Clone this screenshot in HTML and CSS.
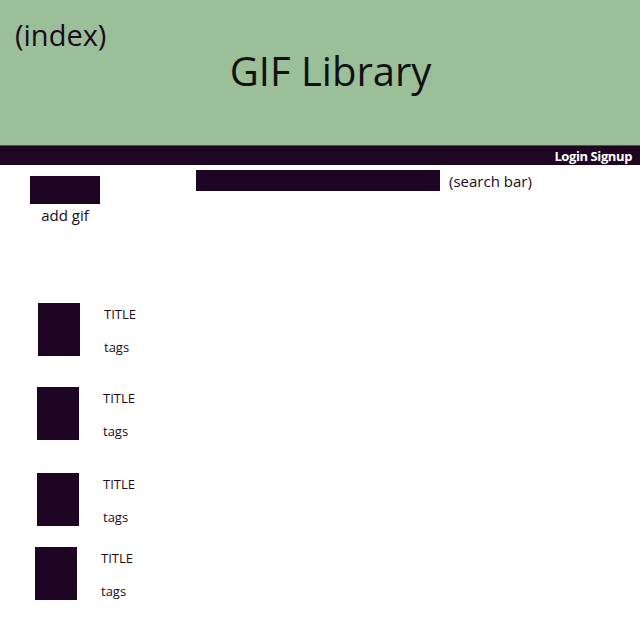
FILE: index.html
```html
<!DOCTYPE html>
<html>
<head>
<meta charset="utf-8">
<link rel="stylesheet" href="styles.css">
</head>
<body>
<header class="hero">
  <div class="hero-label">(index)</div>
  <h1 class="hero-title">GIF Library</h1>
</header>
<nav class="navbar">
  <span class="nav-links">Login Signup</span>
</nav>
<main class="content">
  <div class="toolbar">
    <div class="add">
      <div class="add-btn"></div>
      <div class="add-label">add gif</div>
    </div>
    <div class="search">
      <div class="search-bar"></div>
      <span class="search-label">(search bar)</span>
    </div>
  </div>
  <ul class="gif-list">
    <li class="gif gif-1"><div class="thumb"></div><div class="meta"><div class="title">TITLE</div><div class="tags">tags</div></div></li>
    <li class="gif gif-2"><div class="thumb"></div><div class="meta"><div class="title">TITLE</div><div class="tags">tags</div></div></li>
    <li class="gif gif-3"><div class="thumb"></div><div class="meta"><div class="title">TITLE</div><div class="tags">tags</div></div></li>
    <li class="gif gif-4"><div class="thumb"></div><div class="meta"><div class="title">TITLE</div><div class="tags">tags</div></div></li>
  </ul>
</main>
</body>
</html>
```
FILE: styles.css
```css
* { box-sizing: border-box; }
body {
  margin: 0;
  font-family: "Open Sans", "Noto Sans", sans-serif;
  color: #1b0a20;
  background: #fff;
}
.hero {
  height: 145px;
  background: #9bbf99;
  padding: 20px 0 0 15px;
}
.hero-label {
  font-size: 29px;
  line-height: 29px;
}
.hero-title {
  margin: 0;
  font-weight: 400;
  font-size: 40px;
  line-height: 54px;
  text-align: center;
  margin-top: -5px;
  padding-left: 6px;
  color: #111;
}
.navbar {
  height: 20px;
  background: #1f0623;
  border-top: 1px solid #5a4a5c;
  display: flex;
  justify-content: flex-end;
  align-items: center;
  padding-right: 8px;
}
.nav-links {
  color: #fff;
  font-weight: 700;
  font-size: 13px;
  letter-spacing: -0.4px;
}
.toolbar {
  display: flex;
  align-items: flex-start;
  padding: 5px 0 0 30px;
}
.add {
  width: 70px;
  margin-top: 6px;
  display: flex;
  flex-direction: column;
  align-items: center;
}
.add-btn {
  width: 70px;
  height: 28px;
  background: #1f0524;
}
.add-label {
  font-size: 15px;
  line-height: 20px;
  margin-top: 1px;
}
.search {
  margin-left: 96px;
  display: flex;
  align-items: center;
}
.search-bar {
  width: 244px;
  height: 21px;
  background: #1f0524;
}
.search-label {
  font-size: 15px;
  margin-left: 9px;
}
.gif-list {
  list-style: none;
  margin: 0;
  padding: 0;
}
.gif {
  display: flex;
  align-items: flex-start;
  height: 53px;
}
.thumb {
  width: 42px;
  height: 53px;
  background: #1f0524;
}
.meta {
  margin-left: 24px;
  font-size: 13px;
}
.title { line-height: 20px; margin-top: 1px; }
.tags { line-height: 20px; margin-top: 13px; }
.gif-1 { margin: 78px 0 0 38px; }
.gif-2 { margin: 31px 0 0 37px; }
.gif-3 { margin: 33px 0 0 37px; }
.gif-4 { margin: 21px 0 0 35px; }
```
